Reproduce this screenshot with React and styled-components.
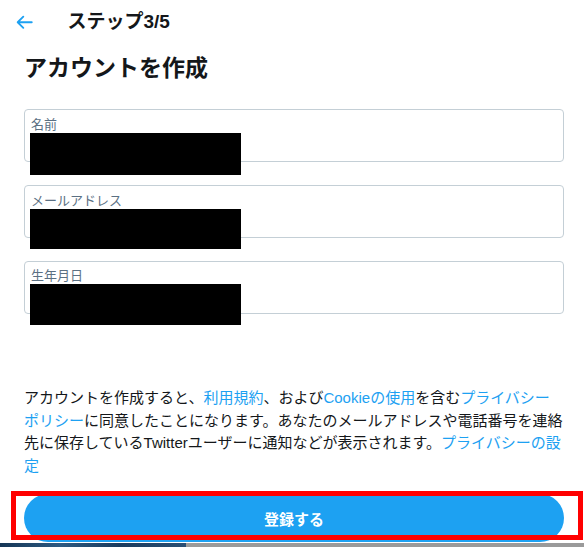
import React from "react";
import styled, { createGlobalStyle } from "styled-components";

const GlobalStyle = createGlobalStyle`
  body {
    margin: 0;
    background: #fff;
    font-family: "Liberation Sans", "Noto Sans CJK JP", sans-serif;
    color: #14171a;
  }
`;

const Page = styled.div`
  width: 584px;
  display: flex;
  flex-direction: column;

  & > * {
    flex-shrink: 0;
  }
`;

const Header = styled.div`
  height: 44px;
  display: flex;
  align-items: center;
  padding-left: 13px;
`;

const BackButton = styled.button`
  border: none;
  background: none;
  padding: 0;
  display: flex;
  color: #1da1f2;
  cursor: pointer;
`;

const StepTitle = styled.h2`
  margin: 0 0 0 32px;
  font-size: 19px;
  font-weight: 700;
  line-height: 24px;
`;

const Content = styled.div`
  padding: 9px 20px 0 24px;
  display: flex;
  flex-direction: column;
`;

const Heading = styled.h1`
  margin: 0;
  font-size: 23px;
  font-weight: 700;
  line-height: 30px;
`;

const Fields = styled.div`
  margin-top: 26px;
  display: flex;
  flex-direction: column;
  gap: 23px;
`;

const Field = styled.div`
  box-sizing: border-box;
  height: 53px;
  border: 1px solid #c4cfd6;
  border-radius: 4px;
  padding: ${p => (p.$tight ? "6px" : "7px")} 6px 0 6px;
`;

const Label = styled.div`
  font-size: 13px;
  line-height: 16px;
  color: #5b7083;
`;

const Redacted = styled.div`
  margin-left: -1px;
  width: 211px;
  height: ${p => p.$h}px;
  background: #000;
`;

const Notice = styled.p`
  margin: 73px 0 0;
  width: 540px;
  font-size: 15px;
  line-height: 22.5px;
`;

const Link = styled.a`
  color: #1da1f2;
  text-decoration: none;
`;

const ButtonWrap = styled.div`
  position: relative;
  margin-top: 17px;
`;

const SignUp = styled.button`
  display: block;
  width: 540px;
  height: 48px;
  border: none;
  border-radius: 24px;
  background: #1da1f2;
  color: #fff;
  font-family: inherit;
  font-size: 15px;
  font-weight: 700;
`;

const Highlight = styled.div`
  position: absolute;
  left: -13px;
  top: -3px;
  width: 572px;
  height: 49px;
  box-sizing: border-box;
  border: 5px solid #ff0000;
  pointer-events: none;
`;

const Strip = styled.div`
  margin-top: 1px;
  height: 10px;
  background: linear-gradient(
    to right,
    #163656 0,
    #2d5a82 60px,
    #1a3b5e 120px,
    #2a4f74 186px,
    #9a9a9a 186px,
    #9a9a9a 100%
  );
`;

const fields = [
  { label: "名前", h: 42 },
  { label: "メールアドレス", h: 40 },
  { label: "生年月日", h: 41, tight: true },
];

export default function App() {
  return (
    <Page>
      <GlobalStyle />
      <Header>
        <BackButton aria-label="戻る">
          <svg width="22.5" height="22.5" viewBox="0 0 24 24" fill="currentColor">
            <path d="M20 11H7.414l4.293-4.293a1 1 0 0 0-1.414-1.414l-6 6a1 1 0 0 0 0 1.414l6 6a.996.996 0 0 0 1.414 0 1 1 0 0 0 0-1.414L7.414 13H20a1 1 0 1 0 0-2z" />
          </svg>
        </BackButton>
        <StepTitle>ステップ3/5</StepTitle>
      </Header>
      <Content>
        <Heading>アカウントを作成</Heading>
        <Fields>
          {fields.map(f => (
            <Field key={f.label} $tight={f.tight}>
              <Label>{f.label}</Label>
              <Redacted $h={f.h} />
            </Field>
          ))}
        </Fields>
        <Notice>
          アカウントを作成すると、<Link href="#">利用規約</Link>、および
          <Link href="#">Cookieの使用</Link>を含む
          <Link href="#">プライバシーポリシー</Link>
          に同意したことになります。あなたのメールアドレスや電話番号を連絡先に保存しているTwitterユーザーに通知などが表示されます。
          <Link href="#">プライバシーの設定</Link>
        </Notice>
        <ButtonWrap>
          <SignUp>登録する</SignUp>
          <Highlight />
        </ButtonWrap>
      </Content>
      <Strip />
    </Page>
  );
}
